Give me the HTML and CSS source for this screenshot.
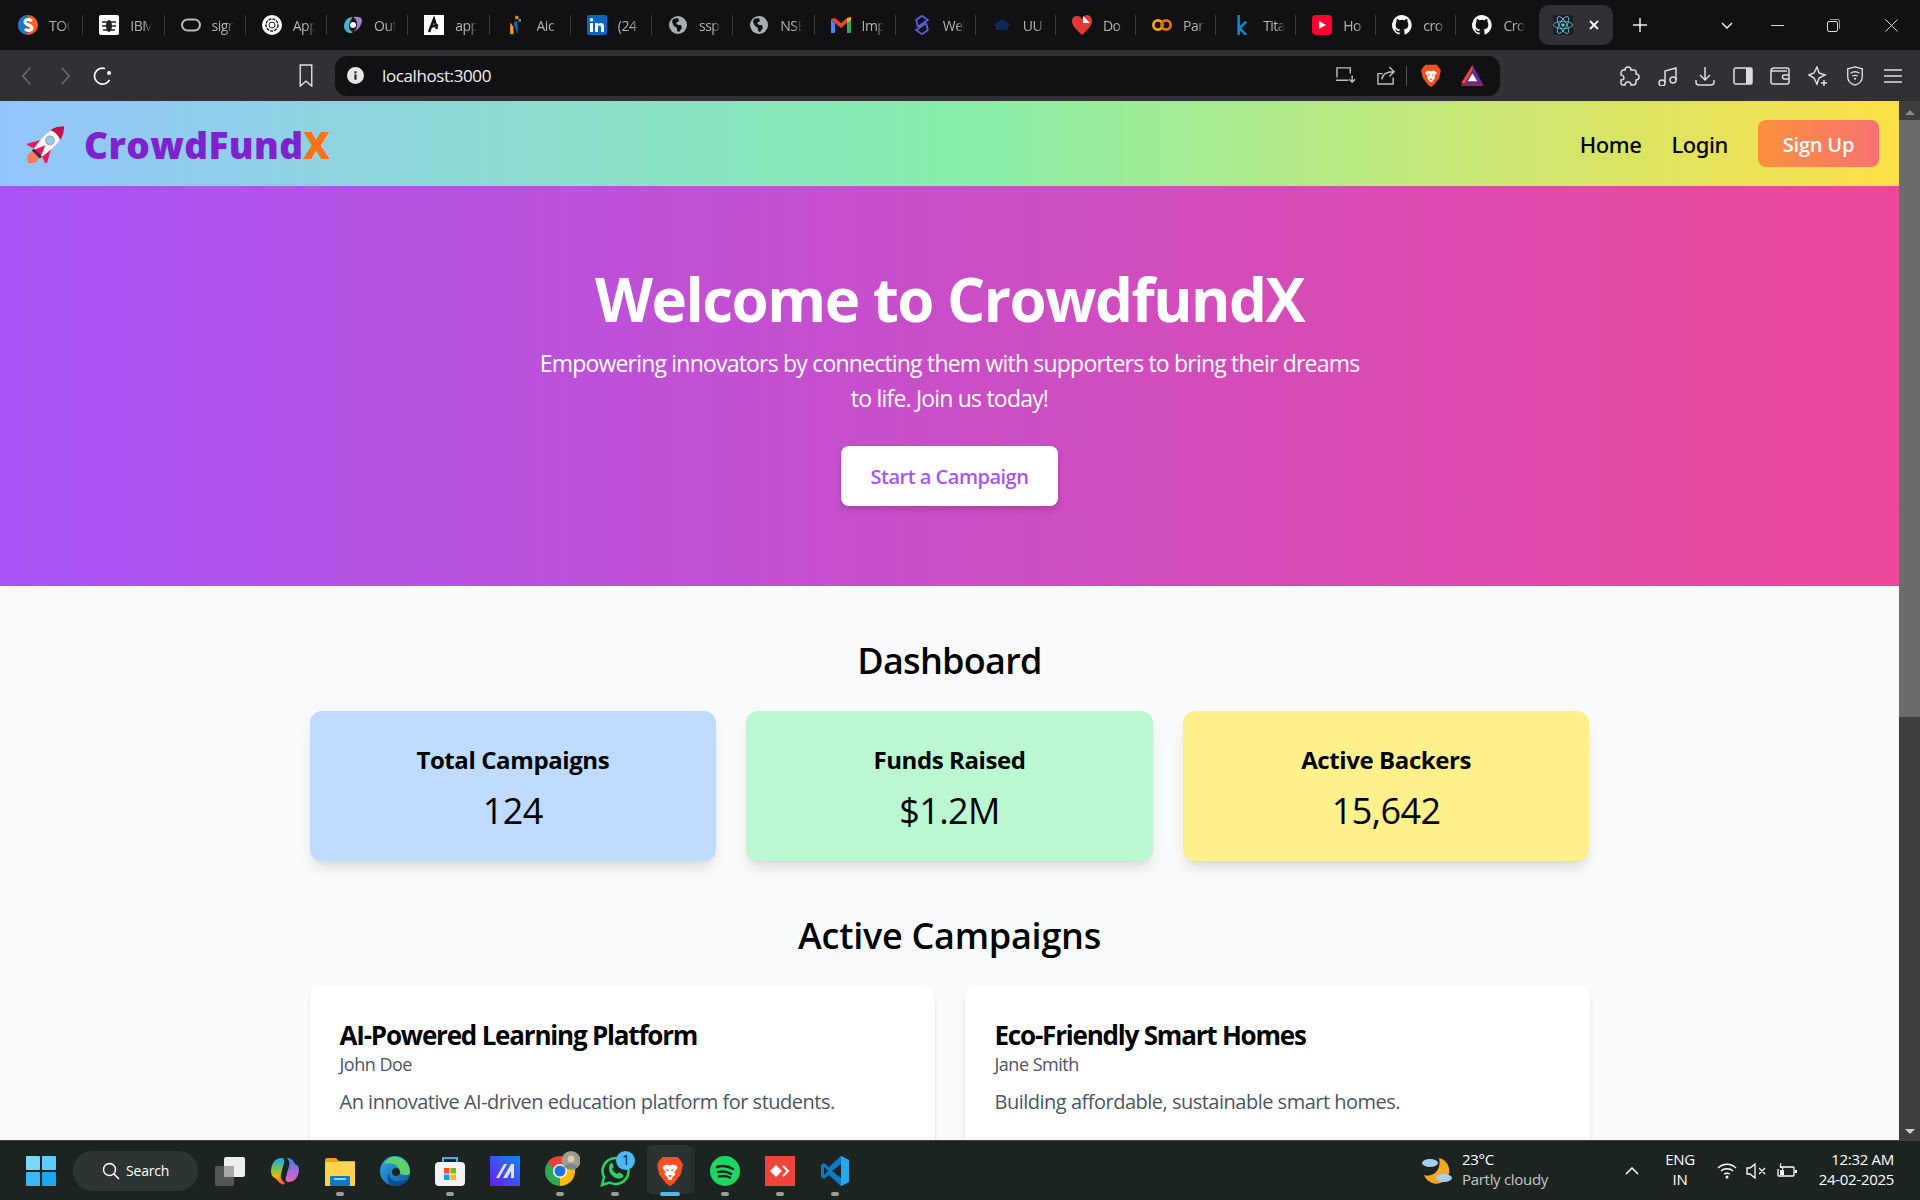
FILE: index.html
```html
<!DOCTYPE html>
<html lang="en">
<head>
  <meta charset="UTF-8">
  <title>CrowdFundX</title>
  <link rel="stylesheet" href="styles.css">
</head>
<body>
  <svg class="defs" width="0" height="0">
    <symbol id="github" viewBox="0 0 16 16"><path fill="#fff" d="M8 0a8 8 0 0 0-2.500 15.600c.4.100.5-.2.5-.4v-1.400c-2.200.5-2.700-1-2.700-1-.4-.9-.9-1.200-.9-1.200-.7-.5.100-.5.100-.5.800.100 1.200.8 1.200.8.700 1.200 1.900.9 2.300.7.100-.5.300-.9.500-1.100-1.800-.2-3.600-.9-3.600-4 0-.9.300-1.600.8-2.100-.1-.2-.4-1 .1-2.100 0 0 .7-.2 2.200.8a7.500 7.500 0 0 1 4 0c1.500-1 2.200-.8 2.200-.8.400 1.100.2 1.900.1 2.100.5.600.8 1.300.8 2.100 0 3.100-1.900 3.700-3.700 3.900.300.300.6.800.6 1.500v2.200c0 .2.100.5.500.4A8 8 0 0 0 8 0z"/></symbol>
    <symbol id="globe" viewBox="0 0 20 20"><circle cx="10" cy="10" r="9" fill="#a9adb3"/><path fill="#111114" d="M5 4l5-1 1 3-3 2 2 2 3 0 1 3-3 4-2-1 0-3-3-2-2-4z"/></symbol>
    <symbol id="brave" viewBox="0 0 24 28"><path fill="#f4511e" d="M5 1h14l3 3.500L24 8l-2 9-6 8-4 3-4-3-6-8L0 8l2-3.500z"/><path fill="#fff" d="M6 9l4-1 2 1 2-1 4 1 1 2-3 4 1 2-3 3v2h-4v-2l-3-3 1-2-3-4z"/><path fill="#f4511e" d="M8 12l3 1-1 1.500zM16 12l-3 1 1 1.500zM10 18h4l-2 2z"/></symbol>
  </svg>

  <div class="tab-bar">
    <div class="tab"><svg class="fav" viewBox="0 0 20 20"><circle cx="10" cy="10" r="10" fill="#f4611e"/><path fill="#1976d2" d="M0 10a10 10 0 0 1 10-10v20a10 10 0 0 1-10-10z"/><path fill="none" stroke="#fff" stroke-width="3" d="M14 6c-2-2-7-2-7 1 0 3 7 3 7 6s-5 3-7 1"/></svg><span class="tab-text">TOC</span></div>
    <div class="tab"><svg class="fav" viewBox="0 0 20 20"><rect width="20" height="20" rx="2" fill="#fff"/><ellipse cx="10" cy="11" rx="3" ry="6" fill="#222"/><path stroke="#222" stroke-width="1.500" d="M3 7l14 0M3 11h14M4 15h12"/></svg><span class="tab-text">IBM</span></div>
    <div class="tab"><svg class="fav" viewBox="0 0 20 20"><rect x="1" y="4.500" width="18" height="11" rx="5.500" fill="none" stroke="#bbb" stroke-width="2"/></svg><span class="tab-text">sign</span></div>
    <div class="tab"><svg class="fav" viewBox="0 0 20 20"><circle cx="10" cy="10" r="10" fill="#fff"/><circle cx="10" cy="10" r="6" fill="none" stroke="#222" stroke-width="1.500" stroke-dasharray="3 1"/><circle cx="10" cy="10" r="3" fill="none" stroke="#222"/></svg><span class="tab-text">App</span></div>
    <div class="tab"><svg class="fav" viewBox="0 0 20 20"><path fill="#46b4c8" d="M10 2C4 2 1 7 1 11c0 4 3 7 6 7 1 0 2 0 3-1-3-1-4-3-4-6s2-7 4-9z"/><path fill="#a582c8" d="M10 2c4-1 9 0 9 3 0 4-3 10-9 12 3-2 4-5 4-8s-2-6-4-7z"/><circle cx="10" cy="10" r="3" fill="#fff"/></svg><span class="tab-text">Out</span></div>
    <div class="tab"><svg class="fav" viewBox="0 0 20 20"><rect width="20" height="20" fill="#fff"/><path fill="none" stroke="#111" stroke-width="2.500" d="M5 17L10 4l3 10M6 12l8-2"/></svg><span class="tab-text">app</span></div>
    <div class="tab"><svg class="fav" viewBox="0 0 20 24"><path fill="#f59a23" d="M3 23V9l4 5v9z"/><path fill="#1a6ed8" d="M7 10l5 13V9l-2-2z" opacity=".9"/><rect x="9" y="1" width="4" height="4" fill="#e8803a"/><rect x="13" y="5" width="3" height="3" fill="#5cb85c"/></svg><span class="tab-text">Aic</span></div>
    <div class="tab"><svg class="fav" viewBox="0 0 20 20"><rect width="20" height="20" rx="2" fill="#0a66c2"/><rect x="3" y="8" width="3" height="9" fill="#fff"/><circle cx="4.500" cy="4.800" r="1.800" fill="#fff"/><path fill="#fff" d="M8 8h3v1.500c1-2 6-2.500 6 2V17h-3v-5c0-2-3-2-3 0v5H8z"/></svg><span class="tab-text">(24</span></div>
    <div class="tab"><svg class="fav"><use href="#globe"/></svg><span class="tab-text">ssp</span></div>
    <div class="tab"><svg class="fav"><use href="#globe"/></svg><span class="tab-text">NSE</span></div>
    <div class="tab"><svg class="fav" viewBox="0 0 20 16"><path fill="#4285f4" d="M0 2v14h4V6z"/><path fill="#34a853" d="M16 6v10h4V2z"/><path fill="#ea4335" d="M4 6l6 5 6-5V1l-6 5-6-5-4 1z"/><path fill="#fbbc04" d="M16 1l4-1v3l-4 3z"/></svg><span class="tab-text">Imp</span></div>
    <div class="tab"><svg class="fav" viewBox="0 0 20 24"><path fill="none" stroke="#5b5bd6" stroke-width="2.200" d="M10 1l7 5-12 8M10 23l-7-5 12-8M5 14L3 6l7-5M15 10l2 8-7 5"/></svg><span class="tab-text">Wel</span></div>
    <div class="tab"><svg class="fav" viewBox="0 0 20 20"><path fill="#0e2a52" d="M10 4l9 6-3 1v4H4v-4l-3-1z"/></svg><span class="tab-text">UU</span></div>
    <div class="tab"><svg class="fav" viewBox="0 0 20 20"><path fill="#e53935" d="M10 20C4 14 0 11 0 6c0-3 2-5 5-5 2 0 4 1 5 3 1-2 3-4 5-4 3 0 5 3 5 6 0 5-4 8-10 14z"/><path fill="#fff" d="M11 1l7 7-7 0z"/></svg><span class="tab-text">Do</span></div>
    <div class="tab"><svg class="fav" viewBox="0 0 22 14"><circle cx="6.500" cy="7" r="5" fill="none" stroke="#f9ab00" stroke-width="3"/><circle cx="15.500" cy="7" r="5" fill="none" stroke="#e8710a" stroke-width="3"/></svg><span class="tab-text">Par</span></div>
    <div class="tab"><svg class="fav" viewBox="0 0 20 24"><path fill="none" stroke="#0b8ec6" stroke-width="3" d="M6 0v24M15 8l-8 8 8 8"/></svg><span class="tab-text">Tita</span></div>
    <div class="tab"><svg class="fav" viewBox="0 0 20 20"><rect width="20" height="20" rx="4" fill="#ff0033"/><path fill="#fff" d="M7 6l7 4-7 4z"/></svg><span class="tab-text">Ho</span></div>
    <div class="tab"><svg class="fav"><use href="#github"/></svg><span class="tab-text">cro</span></div>
    <div class="tab last"><svg class="fav"><use href="#github"/></svg><span class="tab-text">Cro</span></div>
    <div class="tab-active">
      <svg class="fav" viewBox="-11.500 -11.500 23 23"><rect x="-11.500" y="-11.500" width="23" height="23" rx="2" fill="#1d1d22"/><circle r="2.050" fill="#58c4dc"/><g stroke="#58c4dc" fill="none"><ellipse rx="11" ry="4.200"/><ellipse rx="11" ry="4.200" transform="rotate(60)"/><ellipse rx="11" ry="4.200" transform="rotate(120)"/></g></svg>
      <svg class="tab-close" viewBox="0 0 10 10"><path stroke="#fff" stroke-width="1.800" d="M1 1l8 8M9 1l-8 8"/></svg>
    </div>
    <svg class="new-tab" viewBox="0 0 14 14"><path stroke="#eee" stroke-width="1.500" d="M7 0v14M0 7h14"/></svg>
    <div class="win-controls">
      <svg class="win-chev" viewBox="0 0 12 7"><path fill="none" stroke="#eee" stroke-width="1.500" d="M1 1l5 5 5-5"/></svg>
      <svg class="win-min" viewBox="0 0 13 1"><path stroke="#ddd" d="M0 .5h13"/></svg>
      <svg class="win-max" viewBox="0 0 13 13"><rect x=".5" y="2.500" width="10" height="10" rx="1.500" fill="none" stroke="#ddd"/><path fill="none" stroke="#999" d="M3 .5h8a1.500 1.500 0 0 1 1.500 1.500v8"/></svg>
      <svg class="win-close" viewBox="0 0 13 13"><path stroke="#ddd" d="M.5.5l12 12M12.500.5l-12 12"/></svg>
    </div>
  </div>

  <div class="toolbar">
    <svg class="nav-btn" viewBox="0 0 20 24"><path fill="none" stroke="#77777d" stroke-width="1.500" d="M14 2L5 12l9 10"/></svg>
    <svg class="nav-btn" viewBox="0 0 20 24"><path fill="none" stroke="#77777d" stroke-width="1.500" d="M6 2l9 10-9 10"/></svg>
    <svg class="nav-btn" viewBox="0 0 20 20"><path fill="none" stroke="#fff" stroke-width="1.700" d="M16.500 14A8 8 0 1 1 12 2.500"/><circle cx="16" cy="7" r="2" fill="#fff"/></svg>
    <svg class="bookmark" viewBox="0 0 14 24"><path fill="none" stroke="#ddd" stroke-width="1.500" d="M1 1h12v22l-6-5-6 5z"/></svg>
    <div class="address">
      <svg class="info" viewBox="0 0 16 16"><circle cx="8" cy="8" r="8" fill="#e6e6e6"/><rect x="7" y="7" width="2" height="5" fill="#222"/><rect x="7" y="4" width="2" height="2" fill="#222"/></svg>
      <span class="url">localhost:3000</span>
      <svg class="addr-icon" viewBox="0 0 22 20"><path fill="none" stroke="#bbb" stroke-width="1.500" d="M2 12V2h14v6M1 15h13"/><path stroke="#bbb" stroke-width="1.500" fill="none" d="M18 10v7m-3-3l3 3 3-3"/></svg>
      <svg class="addr-icon" viewBox="0 0 20 20"><path fill="none" stroke="#bbb" stroke-width="1.500" d="M17 12v7H1V8h5M5 14c1-6 5-8 12-8M13 1l5 5-5 5"/></svg>
      <div class="addr-sep"></div>
      <svg class="addr-brave"><use href="#brave"/></svg>
      <svg class="addr-bat" viewBox="0 0 24 22"><path fill="#662d91" d="M12 0l12 22H0z"/><path fill="#ff4724" d="M12 0v5L4 19H0z"/><path fill="#9e1f63" d="M4 19h16l4 3H0z"/><path fill="#fff" d="M12 9l5 8H7z"/></svg>
    </div>
    <div class="tool-icons">
      <svg viewBox="0 0 20 20"><path fill="none" stroke="#ddd" stroke-width="1.500" d="M8 1c2 0 3 1 3 3h3c1 0 2 1 2 2v2c2 0 3 1 3 3s-1 3-3 3v2c0 2-1 3-3 3h-2c0-2-1-3-3-3s-3 1-3 3H3c-1 0-2-1-2-2v-3c2 0 3-1 3-2s-1-3-3-3V7c0-1 1-3 2-3h2c0-2 1-3 3-3z"/></svg>
      <svg viewBox="0 0 20 20"><g fill="none" stroke="#ddd" stroke-width="1.500"><circle cx="4" cy="17" r="3"/><circle cx="15" cy="14" r="3"/><path d="M7 17V5l11-3v12"/></g></svg>
      <svg viewBox="0 0 20 20"><g fill="none" stroke="#ddd" stroke-width="1.500"><path d="M10 1v12M5 9l5 5 5-5M1 14v2c0 2 1 3 3 3h12c2 0 3-1 3-3v-2"/></g></svg>
      <svg viewBox="0 0 20 20"><rect x="1" y="2" width="18" height="16" rx="1.500" fill="none" stroke="#ddd" stroke-width="1.500"/><rect x="13" y="2" width="6" height="16" fill="#ddd"/></svg>
      <svg viewBox="0 0 20 20"><g fill="none" stroke="#ddd" stroke-width="1.500"><path d="M17 5H3c-1 0-2-1-2 0v11c0 1 1 2 2 2h14c1 0 2-1 2-2V4c0-1-1-2-2-2H4C2 2 1 3 1 5"/><path d="M19 9h-5c-2 0-2 4 0 4h5"/></g></svg>
      <svg viewBox="0 0 20 20"><g fill="none" stroke="#ddd" stroke-width="1.500"><path d="M9 1l2 6 6 2-6 3-2 6-3-6-5-3 5-2z"/></g><path stroke="#ddd" stroke-width="1.500" d="M16 14v6M13 17h6"/></svg>
      <svg viewBox="0 0 20 22"><g fill="none" stroke="#ddd" stroke-width="1.500"><path d="M10 1l8 2v9c0 5-5 8-8 9-3-1-8-4-8-9V3z"/><path d="M5 8c3-2 7-2 10 0M7 11c2-1 4-1 6 0"/></g><circle cx="10" cy="14" r="1.200" fill="#ddd"/></svg>
      <svg viewBox="0 0 20 20"><path stroke="#ddd" stroke-width="1.500" d="M1 4h18M1 10h18M1 16h18"/></svg>
    </div>
  </div>

  <div class="viewport">
    <div class="page">
      <nav class="topnav">
        <div class="brand">
          <svg class="rocket" viewBox="0 0 40 38">
            <g transform="translate(20 19) rotate(45)">
              <path fill="#fb7c5a" d="M-5 13h10l1 7c-1 4-4 6-6 7-2-1-5-3-6-7z"/>
              <path fill="#f0174f" d="M-6-2l-8 14c-1 2 0 3 2 2l6-2zM6-2l8 14c1 2 0 3-2 2l-6-2z"/>
              <path fill="#fff" d="M0-27C8-19 9-7 6 13h-12C-9-7-8-19 0-27z"/>
              <path fill="#c2114a" d="M0-27c4 4 6.500 8 7.200 13-4-2-10.400-2-14.400 0C-6.500-19-4-23 0-27z"/>
              <path fill="#f0174f" d="M0 1l5 12H-5z"/>
              <rect x="-6" y="12" width="12" height="3" fill="#37274f"/>
              <circle cy="-6" r="4.500" fill="#8ecbf5" stroke="#a9a9b5" stroke-width="1.500"/>
            </g>
          </svg>
          <span class="brand-name">CrowdFund<span class="brand-x">X</span></span>
        </div>
        <div class="nav-links">
          <a class="nav-link">Home</a>
          <a class="nav-link">Login</a>
          <a class="signup">Sign Up</a>
        </div>
      </nav>

      <header class="hero">
        <h1 class="hero-title">Welcome to CrowdfundX</h1>
        <p class="hero-text">Empowering innovators by connecting them with supporters to bring their dreams to life. Join us today!</p>
        <a class="hero-btn">Start a Campaign</a>
      </header>

      <main class="content">
        <h2 class="section-title">Dashboard</h2>
        <div class="stats">
          <div class="stat blue"><h3 class="stat-label">Total Campaigns</h3><p class="stat-value">124</p></div>
          <div class="stat green"><h3 class="stat-label">Funds Raised</h3><p class="stat-value">$1.2M</p></div>
          <div class="stat yellow"><h3 class="stat-label">Active Backers</h3><p class="stat-value">15,642</p></div>
        </div>
        <h2 class="section-title second">Active Campaigns</h2>
        <div class="campaigns">
          <div class="campaign">
            <h3 class="campaign-title">AI-Powered Learning Platform</h3>
            <p class="campaign-owner">John Doe</p>
            <p class="campaign-desc">An innovative AI-driven education platform for students.</p>
          </div>
          <div class="campaign">
            <h3 class="campaign-title">Eco-Friendly Smart Homes</h3>
            <p class="campaign-owner">Jane Smith</p>
            <p class="campaign-desc">Building affordable, sustainable smart homes.</p>
          </div>
        </div>
      </main>
    </div>
    <div class="scrollbar">
      <div class="arrow-up"></div>
      <div class="thumb"></div>
      <div class="arrow-down"></div>
    </div>
  </div>

  <footer class="taskbar">
    <svg class="start" viewBox="0 0 30 30"><rect width="14" height="14" rx="1" fill="#7fd6fb"/><rect x="16" width="14" height="14" rx="1" fill="#5fcdfb"/><rect y="16" width="14" height="14" rx="1" fill="#3ab8f5"/><rect x="16" y="16" width="14" height="14" rx="1" fill="#1ea7f0"/></svg>
    <div class="search"><svg class="search-icon" viewBox="0 0 18 18"><circle cx="7.500" cy="7.500" r="6" fill="none" stroke="#fff" stroke-width="1.500"/><path stroke="#fff" stroke-width="1.500" d="M12 12l5 5"/></svg><span>Search</span></div>
    <div class="apps">
      <div class="app"><svg viewBox="0 0 30 30"><rect x="9" y="1" width="21" height="20" rx="2" fill="#eee"/><rect y="10" width="19" height="20" rx="2" fill="#5c5c5c" opacity=".9"/><rect x="9" y="10" width="10" height="11" fill="#a8a8a8"/></svg></div>
      <div class="app"><svg viewBox="0 0 30 30"><defs><linearGradient id="copl" x1="0" y1="0" x2="0" y2="1"><stop offset="0" stop-color="#1ea7f0"/><stop offset=".45" stop-color="#7ac943"/><stop offset=".7" stop-color="#f7b500"/><stop offset="1" stop-color="#e8483f"/></linearGradient><linearGradient id="copr" x1="0" y1="0" x2="0" y2="1"><stop offset="0" stop-color="#2a8ce8"/><stop offset=".5" stop-color="#9b6bdc"/><stop offset="1" stop-color="#e668b0"/></linearGradient></defs><path fill="url(#copl)" d="M1 14C2 6 6 2 11 2c3 0 4 2 3 5l-3 11c-1 3 0 6 3 8l1 2c-3 1-5 0-7-3l-3-3c-3-1-4-4-4-8z"/><path fill="url(#copr)" d="M19 2c3 1 5 3 6 6 3 1 4 3 4 7-1 7-5 11-10 11-3 0-4-2-3-5l3-11c1-3 0-6-2-8z"/></svg></div>
      <div class="app dot"><svg viewBox="0 0 30 30"><path fill="#e8a317" d="M0 4c0-1 1-2 2-2h9l3 3h16v5H0z"/><rect y="6" width="30" height="24" rx="1" fill="#fcd34d"/><rect x="5" y="20" width="20" height="10" rx="1" fill="#0f78c8"/><rect x="9" y="22" width="12" height="2" fill="#8ed0f5"/></svg></div>
      <div class="app"><svg viewBox="0 0 30 30"><defs><linearGradient id="edg" x1="0" y1="0" x2="1" y2="1"><stop offset="0" stop-color="#2ea9e6"/><stop offset="1" stop-color="#0c59a4"/></linearGradient></defs><circle cx="15" cy="15" r="15" fill="url(#edg)"/><path fill="#5dd26b" d="M12 1c9-2 18 5 18 15 0 2-1 3-3 3-6 0-7-1-8-3 1-4-4-11-15-8 2-4 5-6 8-7z"/><path fill="#0c4f92" d="M30 21c-3 6-9 9-15 9-7 0-9-7-6-13 0 6 5 9 10 8 4 0 8-1 11-4z"/><circle cx="16" cy="16" r="4" fill="#1c2422"/></svg></div>
      <div class="app dot"><svg viewBox="0 0 30 30"><path fill="none" stroke="#38b6e8" stroke-width="2" d="M8 8V2h14v6"/><rect y="6" width="30" height="24" rx="4" fill="#f3f3f3"/><rect x="9" y="12" width="5.500" height="5.500" fill="#f25022"/><rect x="15.500" y="12" width="5.500" height="5.500" fill="#7fba00"/><rect x="9" y="18.500" width="5.500" height="5.500" fill="#00a4ef"/><rect x="15.500" y="18.500" width="5.500" height="5.500" fill="#ffb900"/></svg></div>
      <div class="app"><svg viewBox="0 0 30 30"><defs><linearGradient id="mm" x1="0" y1="1" x2="1" y2="0"><stop offset="0" stop-color="#6a1bf5"/><stop offset="1" stop-color="#1287f0"/></linearGradient></defs><rect width="30" height="30" fill="url(#mm)"/><path fill="#e0e4ff" d="M6 22L14 8h3L9 22zM13 22L21 8h3v14h-3V15l-4 7z"/></svg></div>
      <div class="app dot"><svg class="app-wide" viewBox="0 0 40 40">
        <g fill="none" stroke-width="10" stroke-dasharray="20.940 41.890">
          <circle cx="20" cy="20" r="10" stroke="#ea4335" transform="rotate(210 20 20)"/>
          <circle cx="20" cy="20" r="10" stroke="#fbbc04" transform="rotate(330 20 20)"/>
          <circle cx="20" cy="20" r="10" stroke="#34a853" transform="rotate(90 20 20)"/>
        </g>
        <circle cx="20" cy="20" r="7" fill="#fff"/><circle cx="20" cy="20" r="5.500" fill="#1a73e8"/>
        <circle cx="31" cy="9.500" r="9.500" fill="#a39a8e"/><circle cx="31" cy="8" r="3.500" fill="#d9c8b4"/><path fill="#7a8890" d="M25 16c2-5 10-5 12 0-3 3-9 3-12 0z"/>
      </svg></div>
      <div class="app dot"><svg class="app-wide" viewBox="0 0 40 40">
        <path fill="none" stroke="#25d366" stroke-width="2.500" d="M7 34l2-8a13 13 0 1 1 5.500 5.500z"/>
        <path fill="#25d366" d="M15 13c1-2 3-1 3 1 1 2 0 3-1 4 1 2 3 4 5 5 1-1 2-2 3-1 3 1 4 2 3 4-2 2-6 2-9 0-3-2-5-5-5-8 0-2 0-4 1-5z"/>
        <circle cx="30.500" cy="9.500" r="9.500" fill="#4db8f2"/>
      </svg><span class="badge">1</span></div>
      <div class="app active"><svg class="brave-app"><use href="#brave"/></svg></div>
      <div class="app dot"><svg viewBox="0 0 30 30"><circle cx="15" cy="15" r="15" fill="#1ed760"/><path fill="none" stroke="#1c2422" stroke-width="2.500" stroke-linecap="round" d="M7 11c6-2 11-1 16 2M8 16c5-1 9-1 13 2M9 20.500c4-1 7-1 11 1"/></svg></div>
      <div class="app dot"><svg viewBox="0 0 30 30"><rect width="30" height="30" fill="#ef443b"/><path fill="#fff" d="M11 9l6 6-6 6-6-6z"/><path fill="none" stroke="#fff" stroke-width="2" d="M18 10l5 5-5 5"/></svg></div>
      <div class="app dot"><svg viewBox="0 0 30 30"><path fill="#0a7bc4" d="M21 0l8 4v22l-8 4-12-11-5 4-3-2V9l3-2 5 4z"/><path fill="#2aa6ec" d="M21 0l8 4v22l-8 4z"/><path fill="#1c2422" d="M21 8v14l-9-7z"/><path fill="#1c2422" d="M4 11v8l4-4z"/></svg></div>
    </div>
    <div class="tray">
      <svg class="weather" viewBox="0 0 32 32"><path fill="#f5a623" d="M18 3a13 13 0 1 1-15 17c9 3 18-5 15-17z"/><ellipse cx="9" cy="8" rx="8" ry="4" fill="#a9cdf0"/><ellipse cx="23" cy="23" rx="8" ry="4" fill="#a9cdf0"/></svg>
      <div class="weather-text"><span>23°C</span><span class="muted">Partly cloudy</span></div>
      <svg class="tray-chev" viewBox="0 0 14 8"><path fill="none" stroke="#fff" stroke-width="1.500" d="M1 7l6-6 6 6"/></svg>
      <div class="lang"><span>ENG</span><span>IN</span></div>
      <svg class="tray-icon wifi" viewBox="0 0 20 16"><path fill="none" stroke="#fff" stroke-width="1.300" d="M1 5c5-5 13-5 18 0M4 8c3-3 9-3 12 0M7 11c2-1 4-1 6 0"/><circle cx="10" cy="14" r="1.500" fill="#fff"/></svg>
      <svg class="tray-icon" viewBox="0 0 20 16"><path fill="none" stroke="#fff" stroke-width="1.300" d="M1 5h3l5-4v14l-5-4H1zM13 5l6 6M19 5l-6 6"/></svg>
      <svg class="tray-icon battery" viewBox="0 0 20 16"><path fill="none" stroke="#fff" stroke-width="1.300" d="M3 4H16c1 0 1 1 1 1v7c0 1-1 1-1 1H2c-1 0-1-1-1-1V6"/><path fill="#fff" d="M18 7h2v3h-2zM3 7h4v5H3z"/><path fill="none" stroke="#fff" d="M4 0l-1 4 3 1-1 3"/></svg>
      <div class="clock"><span>12:32 AM</span><span>24-02-2025</span></div>
    </div>
  </footer>
</body>
</html>
```

FILE: styles.css
```css
* {
  box-sizing: border-box;
}

body {
  margin: 0;
  width: 1920px;
  height: 1200px;
  display: flex;
  flex-direction: column;
  overflow: hidden;
  font-family: "Open Sans", "Noto Sans", sans-serif;
  background-color: #111114;
}

h1, h2, h3, p {
  margin: 0;
}

svg {
  display: block;
  flex-shrink: 0;
}

.defs {
  position: absolute;
}

/* browser tabs */
.tab-bar {
  height: 50px;
  flex-shrink: 0;
  display: flex;
  align-items: center;
  padding-left: 2px;
  background-color: #111114;
}

.tab {
  width: 81.250px;
  height: 20px;
  padding-left: 16px;
  display: flex;
  align-items: center;
  border-right: 1px solid #3a3a3e;
}

.tab:nth-child(n+12) {
  width: 80.100px;
}

.tab.last {
  border-right: none;
}

.fav {
  width: 20px;
  height: 20px;
}

/* long titles fade out, the way the browser does it */
.tab-text {
  width: 32px;
  margin-left: 11px;
  white-space: nowrap;
  font-size: 14px;
  letter-spacing: -0.5px;
  color: #b4b4b8;
  -webkit-mask-image: linear-gradient(to right, #000 14px, transparent 22px);
  mask-image: linear-gradient(to right, #000 14px, transparent 22px);
}

.tab-active {
  width: 74px;
  height: 40px;
  margin-left: 2px;
  padding-left: 14px;
  display: flex;
  align-items: center;
  border-radius: 10px;
  background-color: #303035;
}

.tab-close {
  width: 10px;
  height: 10px;
  margin-left: 16px;
}

.new-tab {
  width: 14px;
  height: 14px;
  margin-left: 20px;
}

.win-controls {
  display: flex;
  align-items: center;
  margin-left: 74px;
}

.win-chev {
  width: 12px;
  height: 7px;
}

.win-min {
  width: 13px;
  height: 1px;
  margin-left: 38px;
}

.win-max {
  width: 13px;
  height: 13px;
  margin-left: 43px;
}

.win-close {
  width: 13px;
  height: 13px;
  margin-left: 45px;
}

/* address bar row */
.toolbar {
  height: 51px;
  flex-shrink: 0;
  display: flex;
  align-items: center;
  padding-left: 17px;
  background-color: #303035;
}

.nav-btn {
  width: 20px;
  height: 20px;
  margin-right: 18px;
}

.bookmark {
  width: 14px;
  height: 23px;
  margin-left: 168px;
}

.address {
  width: 1165px;
  height: 40px;
  margin-left: 22px;
  padding-left: 12px;
  display: flex;
  align-items: center;
  border-radius: 12px;
  background-color: #111114;
}

.info {
  width: 17px;
  height: 17px;
}

.url {
  margin-left: 18px;
  width: 953px;
  font-size: 17px;
  letter-spacing: -0.4px;
  color: #f0f0f0;
}

.addr-icon {
  width: 21px;
  height: 19px;
  margin-right: 20px;
}

.addr-sep {
  width: 1px;
  height: 20px;
  margin-left: -11px;
  background-color: #55555a;
}

.addr-brave {
  width: 20px;
  height: 23px;
  margin-left: 14px;
}

.addr-bat {
  width: 23px;
  height: 21px;
  margin-left: 20px;
}

.tool-icons {
  display: flex;
  align-items: center;
  gap: 17.500px;
  margin-left: 120px;
}

.tool-icons svg {
  width: 20px;
  height: 20px;
}

/* the page itself */
.viewport {
  height: 1039px;
  flex-shrink: 0;
  display: flex;
  overflow: hidden;
}

.page {
  width: 1899px;
  background-color: #f9fafb;
}

.topnav {
  height: 85px;
  padding: 0 20px 0 27px;
  display: flex;
  align-items: center;
  justify-content: space-between;
  background: linear-gradient(to right, #93c5fd, #86efac, #fde047);
}

.brand {
  display: flex;
  align-items: center;
  gap: 19px;
}

.rocket {
  width: 38px;
  height: 37px;
  margin-top: 2px;
}

.brand-name {
  padding-top: 2px;
  font-size: 37px;
  font-weight: 800;
  letter-spacing: 0.4px;
  color: #7e22ce;
}

.brand-x {
  color: #f97316;
}

.nav-links {
  display: flex;
  align-items: center;
}

.nav-link {
  margin-right: 30px;
  font-family: "Noto Sans", "Open Sans", sans-serif;
  font-size: 22px;
  font-weight: 500;
  letter-spacing: -0.4px;
  color: #000;
}

.signup {
  width: 121px;
  height: 47px;
  padding-top: 1px;
  display: flex;
  align-items: center;
  justify-content: center;
  border-radius: 8px;
  font-size: 20px;
  font-weight: 600;
  letter-spacing: -0.2px;
  color: #fff;
  background: linear-gradient(to right, #fb923c, #f87171);
}

.hero {
  height: 400px;
  padding-top: 77px;
  display: flex;
  flex-direction: column;
  align-items: center;
  text-align: center;
  color: #fff;
  background: linear-gradient(to right, #a855f7, #ec4899);
}

.hero-title {
  font-size: 60px;
  line-height: 72px;
  font-weight: 700;
  letter-spacing: -1.500px;
}

.hero-text {
  width: 840px;
  margin-top: 11px;
  font-size: 23px;
  line-height: 35px;
  letter-spacing: -0.8px;
}

.hero-btn {
  width: 217px;
  height: 60px;
  margin-top: 30px;
  display: flex;
  align-items: center;
  justify-content: center;
  border-radius: 8px;
  font-size: 20px;
  font-weight: 600;
  letter-spacing: -0.5px;
  color: #a855f7;
  background-color: #fff;
  box-shadow: 0 4px 6px rgba(0, 0, 0, 0.15);
}

.content {
  width: 1280px;
  margin: 0 auto;
  padding-top: 50px;
}

.section-title {
  height: 50px;
  font-size: 36px;
  line-height: 50px;
  font-weight: 600;
  letter-spacing: -0.7px;
  text-align: center;
  color: #000;
}

.section-title.second {
  margin-top: 50px;
  letter-spacing: -0.25px;
}

.stats {
  margin-top: 25px;
  display: grid;
  grid-template-columns: repeat(3, 1fr);
  gap: 30px;
}

.stat {
  height: 150px;
  padding-top: 33px;
  text-align: center;
  border-radius: 12px;
  box-shadow: 0 10px 15px -3px rgba(0, 0, 0, 0.1), 0 4px 6px -4px rgba(0, 0, 0, 0.1);
}

.blue {
  background-color: #bfdbfe;
}

.green {
  background-color: #bbf7d0;
}

.yellow {
  background-color: #fef08a;
}

.stat-label {
  font-size: 24px;
  line-height: 32px;
  font-weight: 700;
  letter-spacing: -0.4px;
}

.stat-value {
  margin-top: 11px;
  font-size: 36px;
  line-height: 48px;
  letter-spacing: -0.6px;
}

.campaigns {
  margin-top: 25px;
  display: grid;
  grid-template-columns: repeat(2, 1fr);
  gap: 30px;
}

.campaign {
  height: 300px;
  padding: 31px 30px;
  border-radius: 12px;
  background-color: #fff;
  box-shadow: 0 4px 6px -1px rgba(0, 0, 0, 0.1), 0 2px 4px -2px rgba(0, 0, 0, 0.1);
}

.campaign-title {
  font-size: 26px;
  line-height: 36px;
  font-weight: 700;
  letter-spacing: -1.200px;
}

.campaign-owner {
  margin-top: -2px;
  font-size: 18px;
  line-height: 26px;
  letter-spacing: -0.5px;
  color: #4b5563;
}

.campaign-desc {
  margin-top: 10px;
  font-size: 20px;
  line-height: 30px;
  letter-spacing: -0.5px;
  color: #4b5563;
}

.scrollbar {
  width: 21px;
  display: flex;
  flex-direction: column;
  align-items: center;
  background-color: #3e3e3e;
}

.arrow-up, .arrow-down {
  width: 0;
  height: 0;
  margin: 9px 0 5px;
  border-left: 5px solid transparent;
  border-right: 5px solid transparent;
}

.arrow-up {
  border-bottom: 5px solid #8a8a8a;
}

.arrow-down {
  margin: auto 0 6px;
  border-top: 5px solid #cfcfcf;
}

.thumb {
  width: 100%;
  height: 597px;
  background-color: #6b6b6b;
}

/* windows taskbar */
.taskbar {
  height: 60px;
  flex-shrink: 0;
  display: flex;
  align-items: center;
  padding-left: 26px;
  color: #fff;
  background-color: #1c2422;
  border-top: 1px solid #3a4240;
}

.start {
  width: 30px;
  height: 30px;
}

.search {
  width: 125px;
  height: 40px;
  margin-left: 17px;
  padding-left: 29px;
  display: flex;
  align-items: center;
  gap: 6px;
  border-radius: 20px;
  font-size: 14px;
  letter-spacing: -0.2px;
  background-color: #2c3533;
}

.search-icon {
  width: 18px;
  height: 18px;
  flex-shrink: 0;
}

.apps {
  display: flex;
  margin-left: 4px;
}

.app {
  width: 55px;
  height: 59px;
  position: relative;
  display: flex;
  align-items: center;
  justify-content: center;
}

.app svg {
  width: 30px;
  height: 30px;
  position: relative;
}

.app .app-wide {
  width: 40px;
  height: 40px;
}

.app.dot::after, .app.active::after {
  content: "";
  position: absolute;
  bottom: 4px;
  left: 24px;
  width: 8px;
  height: 4px;
  border-radius: 2px;
  background-color: #9a9e9d;
}

/* brave is the open window, so it gets a plate under the icon */
.app.active::before {
  content: "";
  position: absolute;
  top: 4px;
  left: 5px;
  width: 44px;
  height: 49px;
  border-radius: 5px;
  background-color: #2a3331;
  box-shadow: 5px 0 0 -1px #262e2c;
}

.app.active::after {
  left: 18px;
  width: 20px;
  background-color: #4db8f2;
}

.app .brave-app {
  width: 26px;
  height: 32px;
}

.badge {
  position: absolute;
  top: 9px;
  left: 35px;
  font-size: 14px;
  line-height: 19px;
  color: #12232b;
}

.tray {
  display: flex;
  align-items: center;
  margin-left: 559px;
}

.weather {
  width: 32px;
  height: 32px;
}

.weather-text, .lang, .clock {
  padding-bottom: 3px;
  display: flex;
  flex-direction: column;
  font-size: 15px;
  line-height: 20px;
  letter-spacing: -0.3px;
}

.weather-text {
  width: 150px;
  margin-left: 9px;
}

.muted {
  color: #c4c8c7;
}

.tray-chev {
  width: 14px;
  height: 8px;
  margin-left: 13px;
}

.lang {
  width: 40px;
  margin-left: 21px;
  align-items: center;
}

.tray-icon {
  width: 20px;
  height: 16px;
  margin-left: 9px;
}

.tray-icon.wifi {
  margin-left: 17px;
}

.tray-icon.battery {
  margin-left: 11px;
}

.clock {
  width: 86px;
  margin-left: 11px;
  align-items: flex-end;
  white-space: nowrap;
}
```
